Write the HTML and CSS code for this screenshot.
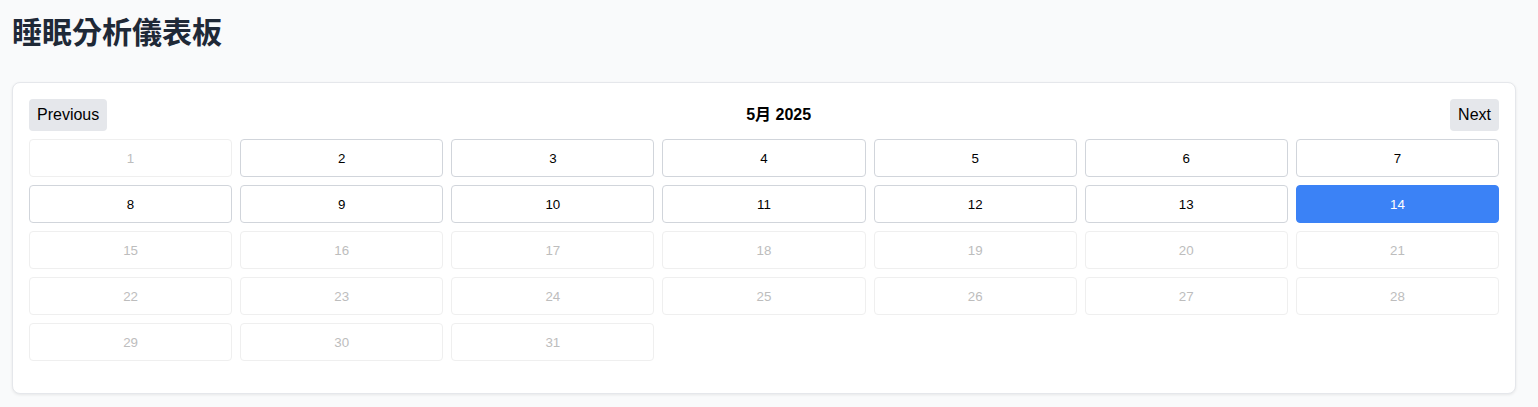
FILE: index.html
```html
<!DOCTYPE html>
<html lang="zh-Hant">
<head>
<meta charset="utf-8">
<title>睡眠分析儀表板</title>
<link rel="stylesheet" href="styles.css">
</head>
<body>
<main class="page">
  <h1 class="title">睡眠分析儀表板</h1>
  <section class="card">
    <div class="cal-header">
      <button class="nav-btn">Previous</button>
      <div class="month">5月 2025</div>
      <button class="nav-btn">Next</button>
    </div>
    <div class="grid">
      <button class="day off" disabled>1</button>
      <button class="day">2</button>
      <button class="day">3</button>
      <button class="day">4</button>
      <button class="day">5</button>
      <button class="day">6</button>
      <button class="day">7</button>
      <button class="day">8</button>
      <button class="day">9</button>
      <button class="day">10</button>
      <button class="day">11</button>
      <button class="day">12</button>
      <button class="day">13</button>
      <button class="day selected">14</button>
      <button class="day off" disabled>15</button>
      <button class="day off" disabled>16</button>
      <button class="day off" disabled>17</button>
      <button class="day off" disabled>18</button>
      <button class="day off" disabled>19</button>
      <button class="day off" disabled>20</button>
      <button class="day off" disabled>21</button>
      <button class="day off" disabled>22</button>
      <button class="day off" disabled>23</button>
      <button class="day off" disabled>24</button>
      <button class="day off" disabled>25</button>
      <button class="day off" disabled>26</button>
      <button class="day off" disabled>27</button>
      <button class="day off" disabled>28</button>
      <button class="day off" disabled>29</button>
      <button class="day off" disabled>30</button>
      <button class="day off" disabled>31</button>
    </div>
  </section>
</main>
</body>
</html>
```
FILE: styles.css
```css
html, body {
  margin: 0;
  padding: 0;
  background: #f9fafb;
}
body {
  font-family: "Liberation Sans", Arial, "Noto Sans CJK TC", sans-serif;
  color: #111827;
}
.page {
  padding: 12px 22px 12px 12px;
}
.title {
  margin: 0 0 34px 0;
  font-family: "Noto Sans CJK TC", "Noto Sans CJK SC", sans-serif;
  font-size: 30px;
  line-height: 36px;
  font-weight: 700;
  color: #1f2937;
}
.card {
  background: #ffffff;
  border: 1px solid #e5e7eb;
  border-radius: 8px;
  box-shadow: 0 1px 3px rgba(0, 0, 0, 0.08);
  padding: 16px 16px 32px 16px;
}
.cal-header {
  display: flex;
  justify-content: space-between;
  align-items: center;
  margin-bottom: 8px;
}
.nav-btn {
  font-family: "Liberation Sans", Arial, sans-serif;
  font-size: 16px;
  line-height: 20px;
  padding: 6px 8px;
  border: none;
  border-radius: 4px;
  background: #e5e7eb;
  color: #000;
}
.month {
  font-family: "Liberation Sans", Arial, "Noto Sans CJK TC", sans-serif;
  font-size: 16px;
  line-height: 16px;
  font-weight: 700;
  color: #000;
}
.grid {
  display: grid;
  grid-template-columns: repeat(7, 1fr);
  gap: 8px;
}
.day {
  height: 38px;
  font-family: "Liberation Sans", Arial, sans-serif;
  font-size: 13.33px;
  background: #ffffff;
  border: 1px solid #d1d5db;
  border-radius: 4px;
  color: #000;
  padding: 0;
}
.day.off {
  color: #bdbdbd;
  border-color: #efefef;
}
.day.selected {
  background: #3b82f6;
  border-color: #3b82f6;
  color: #ffffff;
}
```
